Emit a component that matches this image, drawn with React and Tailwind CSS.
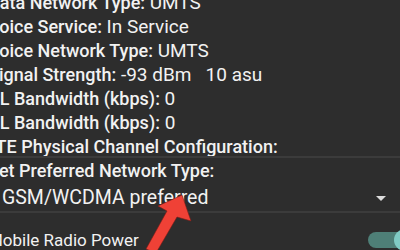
export default function App() {
  const rows = [
    ["Data Network Type:", "UMTS"],
    ["Voice Service:", "In Service"],
    ["Voice Network Type:", "UMTS"],
    ["Signal Strength:", "-93 dBm   10 asu"],
    ["DL Bandwidth (kbps):", "0"],
    ["UL Bandwidth (kbps):", "0"],
    ["LTE Physical Channel Configuration:", ""],
  ];
  return (
    <div
      className="relative w-[400px] h-[250px] overflow-hidden bg-[#2d2d2d] text-[#f2f2f2]"
      style={{ fontFamily: "Roboto, 'Noto Sans', sans-serif" }}
    >
      <div className="ml-[-12px] mt-[-9px] flex flex-col">
        {rows.map(([k, v], i) => (
          <div key={i} className="h-[24px] leading-[24px] text-[19px] whitespace-pre">
            <span className="font-medium text-[18px]">{k}</span>
            {v ? <span> {v}</span> : null}
          </div>
        ))}
        <div className="mt-[-3px] ml-[12px] h-[2px] bg-[#3b3b3b]" />
        <div className="mt-[1px] h-[24px] leading-[24px] text-[18px] font-medium">
          Set Preferred Network Type:
        </div>
        <div className="mt-[3px] ml-[14px] flex items-center justify-between pr-[14px] h-[24px] leading-[24px] text-[19.5px]">
          <span>GSM/WCDMA preferred</span>
          <span className="w-0 h-0 border-l-[5px] border-r-[5px] border-t-[5px] border-l-transparent border-r-transparent border-t-[#dcdcdc]" />
        </div>
        <div className="mt-[1px] ml-[12px] h-[2px] bg-[#3b3b3b]" />
        <div className="mt-[15px] flex items-center justify-between h-[24px] leading-[24px] text-[17px]">
          <span>Mobile Radio Power</span>
          <span className="relative mr-[-20px] flex items-center w-[52px] h-[24px]">
            <span className="absolute left-0 right-0 h-[16px] rounded-full bg-[#4e7f77]" />
            <span className="absolute right-[4px] w-[22px] h-[22px] rounded-full bg-[#80cbc4]" />
          </span>
        </div>
      </div>
      <svg className="absolute left-0 top-0" width="400" height="250" viewBox="0 0 400 250">
        <path
          d="M182 195 L191 221 L177 217 L156 253 L146 249 L167 211 L158 206 Z"
          fill="#ef4136"
          stroke="#7a1d18"
          strokeWidth="0.6"
          strokeLinejoin="round"
        />
      </svg>
    </div>
  );
}
